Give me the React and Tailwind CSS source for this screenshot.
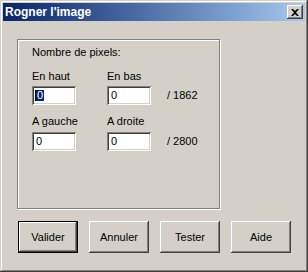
import React from "react";

const raised =
  "shadow-[inset_-1px_-1px_#404040,inset_1px_1px_#ffffff,inset_-2px_-2px_#808080,inset_2px_2px_#d4d0c8]";
const sunken =
  "shadow-[inset_1px_1px_#808080,inset_-1px_-1px_#ffffff,inset_2px_2px_#404040,inset_-2px_-2px_#d4d0c8]";

const Field = ({ value, selected }) => (
  <div className={`w-[44px] h-[19px] bg-white ${sunken} flex items-center pl-[3px] text-[11px] leading-none`}>
    {selected ? (
      <span className="bg-[#0a246a] text-white px-[1px] border-l border-black">{value}</span>
    ) : (
      <span className="pl-[1px]">{value}</span>
    )}
  </div>
);

const Button = ({ label, isDefault }) => (
  <div className={`w-[60px] h-[32px] ${isDefault ? "border border-black" : ""}`}>
    <div className={`w-full h-full bg-[#d4d0c8] ${raised} flex items-center justify-center text-[11px] text-black`}>
      {label}
    </div>
  </div>
);

export default function App() {
  return (
    <div
      className={`w-[308px] h-[272px] bg-[#d4d0c8] p-[3px] flex flex-col shadow-[inset_-1px_-1px_#404040,inset_1px_1px_#d4d0c8,inset_-2px_-2px_#808080,inset_2px_2px_#ffffff]`}
      style={{ fontFamily: '"Liberation Sans", Arial, sans-serif' }}
    >
      <div className="h-[18px] bg-gradient-to-r from-[#0a246a] to-[#a6caf0] flex items-center justify-between pl-[2px] pr-[2px]">
        <span className="text-white font-bold text-[12px] leading-none">Rogner l'image</span>
        <div className={`w-[16px] h-[14px] bg-[#d4d0c8] ${raised} flex items-center justify-center`}>
          <svg width="8" height="7" viewBox="0 0 8 7">
            <path d="M0 0h2l2 2 2-2h2L5 3.5 8 7H6L4 5 2 7H0l3-3.5z" fill="black" />
          </svg>
        </div>
      </div>

      <div className="flex-1 flex flex-col pl-[14px] pt-[18px]">
        <div className="w-[203px] h-[170px] border border-[#808080] shadow-[inset_1px_1px_#ffffff,1px_1px_#ffffff] pl-[14px] pt-[6px] text-[11px] text-black">
          <div className="h-[13px] leading-[13px]">Nombre de pixels:</div>

          <div className="mt-[11px] flex h-[12px] leading-[12px]">
            <span className="w-[75px]">En haut</span>
            <span>En bas</span>
          </div>
          <div className="mt-[4px] flex items-center">
            <div className="w-[75px]"><Field value="0" selected /></div>
            <Field value="0" />
            <span className="ml-[16px]">/ 1862</span>
          </div>

          <div className="mt-[10px] flex h-[12px] leading-[12px]">
            <span className="w-[75px]">A gauche</span>
            <span>A droite</span>
          </div>
          <div className="mt-[5px] flex items-center">
            <div className="w-[75px]"><Field value="0" /></div>
            <Field value="0" />
            <span className="ml-[16px]">/ 2800</span>
          </div>
        </div>

        <div className="mt-[12px] ml-[1px] flex gap-[11px]">
          <Button label="Valider" isDefault />
          <Button label="Annuler" />
          <Button label="Tester" />
          <Button label="Aide" />
        </div>
      </div>
    </div>
  );
}
